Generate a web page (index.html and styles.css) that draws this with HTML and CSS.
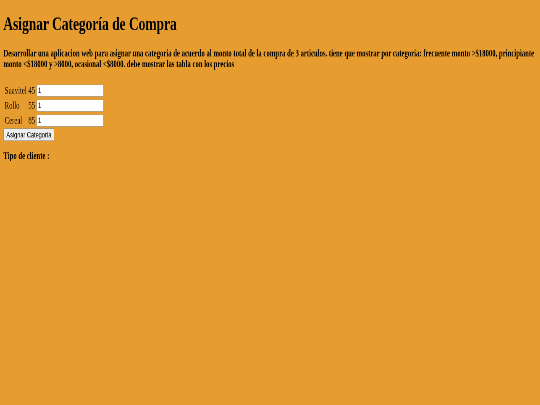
FILE: index.html
```html
<!DOCTYPE html>
<html lang="es">
<head>
<meta charset="utf-8">
<title>Asignar Categoría de Compra</title>
<link rel="stylesheet" href="styles.css">
</head>
<body class="page">
<div class="stage">
  <h1 class="title">Asignar Categoría de Compra</h1>
  <h4 class="intro">Desarrollar una aplicacion web para asignar una categoria de acuerdo al monto total de la compra de 3 articulos. tiene que mostrar por categoria: frecuente monto &gt;$18000, principiante monto &lt;$18000 y &gt;8000, ocasional &lt;$8000. debe mostrar las tabla con los precios</h4>
  <form class="form">
    <table class="items">
      <tr><td>Suavitel</td><td>45</td><td><input class="qty" type="text" value="1"></td></tr>
      <tr><td>Rollo</td><td>55</td><td><input class="qty" type="text" value="1"></td></tr>
      <tr><td>Cereal</td><td>85</td><td><input class="qty" type="text" value="1"></td></tr>
    </table>
    <button class="btn" type="button">Asignar Categoría</button>
  </form>
  <p class="result">Tipo de cliente :</p>
</div>
</body>
</html>
```
FILE: styles.css
```css
html, .page {
  margin: 0;
  padding: 0;
  background: #e69c2e;
  overflow: hidden;
}
.stage {
  display: flow-root;
  box-sizing: border-box;
  width: 1286px;
  height: 675px;
  padding: 0 8px;
  transform: scale(0.42, 0.6);
  transform-origin: 0 0;
  will-change: transform;
  font-family: "Liberation Serif", "Times New Roman", serif;
  font-size: 16px;
  color: #000;
}
.title {
  font-size: 2em;
  margin: 0.67em 0;
}
.intro {
  font-size: 1em;
  margin: 1.33em 0;
}
.items {
  border-spacing: 2px;
}
.items td {
  padding: 1px;
  height: 21px;
}
.qty {
  box-sizing: border-box;
  width: 160px;
  height: 20px;
  padding: 1px 2px;
  border: 1px solid #a0a0a0;
  border-radius: 2px;
  background: #fff;
  vertical-align: middle;
  font-family: "Liberation Sans", Arial, sans-serif;
  font-size: 13.333px;
}
.btn {
  box-sizing: border-box;
  height: 21px;
  padding: 1px 6px;
  border: 1px solid #8f8f8f;
  border-radius: 2px;
  background: #efefef;
  color: #000;
  font-family: "Liberation Sans", Arial, sans-serif;
  font-size: 13.333px;
}
.result {
  font-size: 1em;
  font-weight: bold;
  margin: 1em 0;
}
```
